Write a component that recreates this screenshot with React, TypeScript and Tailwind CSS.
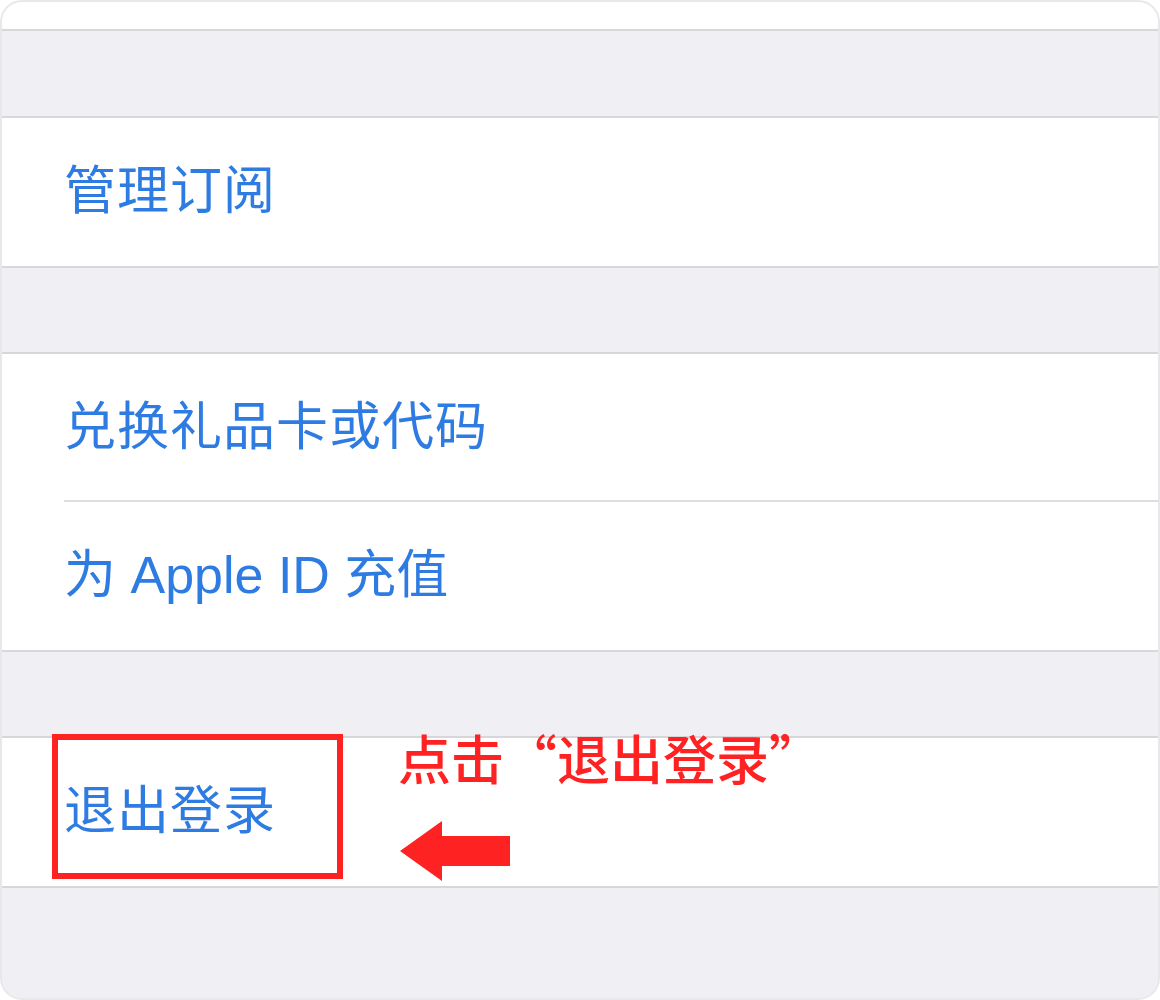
const font = { fontFamily: '"Liberation Sans", "Noto Sans CJK SC", sans-serif' };

function Row({ children, last, wide }: { children: React.ReactNode; last?: boolean; wide?: boolean }) {
  return (
    <div className="relative flex h-[148px] items-center bg-white pl-[62px] text-[52px] leading-none text-[#2e7ce2]">
      <span className={wide ? '-translate-y-[1px] tracking-[1px]' : '-translate-y-[1px]'}>{children}</span>
      {!last && <div className="absolute bottom-0 left-[62px] right-0 h-[2px] bg-[#dedee2]" />}
    </div>
  );
}

function Group({ children }: { children: React.ReactNode }) {
  return <div className="border-y-2 border-[#d6d6db] bg-white">{children}</div>;
}

export default function App() {
  return (
    <div className="h-[1000px] w-[1160px] bg-white" style={font}>
      <div className="relative flex h-full w-full flex-col overflow-hidden rounded-[22px] border-2 border-[#e8e8ea] bg-[#efeff4]">
        <div className="h-[29px] shrink-0 border-b-2 border-[#d6d6db] bg-white" />
        <div className="h-[85px] shrink-0 bg-[#efeff4]" />
        <Group>
          <Row last wide>管理订阅</Row>
        </Group>
        <div className="h-[84px] shrink-0 bg-[#efeff4]" />
        <Group>
          <Row wide>兑换礼品卡或代码</Row>
          <Row last>为 Apple ID 充值</Row>
        </Group>
        <div className="h-[84px] shrink-0 bg-[#efeff4]" />
        <Group>
          <Row last wide>退出登录</Row>
        </Group>
        <div className="flex-1 bg-[#efeff4]" />

        {/* annotation */}
        <div className="absolute left-[50px] top-[732px] h-[145px] w-[291px] border-[6px] border-[#ff2222]" />
        <div
          className="absolute left-[396px] top-[729px] text-[53px] font-medium leading-none text-[#ff2222]"
          style={{ fontFamily: '"Noto Sans CJK SC", sans-serif' }}
        >
          点击“退出登录”
        </div>
        <svg className="absolute left-[398px] top-[818px]" width="110" height="62" viewBox="0 0 110 62">
          <polygon points="0,31 42,1 42,16 110,16 110,46 42,46 42,61" fill="#ff2222" />
        </svg>
      </div>
    </div>
  );
}
